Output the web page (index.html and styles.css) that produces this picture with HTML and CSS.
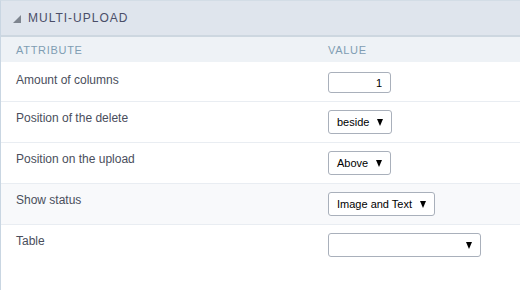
FILE: index.html
```html
<!DOCTYPE html>
<html lang="en">
<head>
    <meta charset="UTF-8">
    <title>Multi-Upload</title>
    <link rel="stylesheet" href="styles.css">
</head>
<body>

    <div class="panel">
        <div class="panel-head">
            <span class="caret"></span>
            <span class="title">MULTI-UPLOAD</span>
        </div>
        <div class="row col-head">
            <div class="label">ATTRIBUTE</div>
            <div class="value">VALUE</div>
        </div>
        <div class="row first">
            <div class="label">Amount of columns</div>
            <div class="value"><input class="num" type="text" value="1"></div>
        </div>
        <div class="row">
            <div class="label">Position of the delete</div>
            <div class="value"><div class="select w64"><span>beside</span><span class="arrow"></span></div></div>
        </div>
        <div class="row">
            <div class="label">Position on the upload</div>
            <div class="value"><div class="select w63"><span>Above</span><span class="arrow"></span></div></div>
        </div>
        <div class="row alt">
            <div class="label">Show status</div>
            <div class="value"><div class="select w107"><span>Image and Text</span><span class="arrow"></span></div></div>
        </div>
        <div class="row last">
            <div class="label">Table</div>
            <div class="value"><div class="select w153"><span></span><span class="arrow"></span></div></div>
        </div>
    </div>

</body>
</html>
```

FILE: styles.css
```css
body {
    margin: 0;
    font-family: "Liberation Sans", Arial, sans-serif;
    background: #ffffff;
}
.panel {
    height: 290px;
    border-top: 1px solid #d3dde6;
    border-left: 1px solid #c9d6e2;
    box-sizing: border-box;
}
.panel-head {
    height: 34px;
    background: #dfe5ed;
    border-bottom: 2px solid #cdd7e0;
    display: flex;
    align-items: center;
    padding-left: 12px;
}
.caret {
    width: 0;
    height: 0;
    border-left: 8px solid transparent;
    border-bottom: 8px solid #7e858f;
    margin-right: 7px;
    margin-top: 1px;
}
.title {
    font-size: 12px;
    letter-spacing: 1px;
    color: #4a4e68;
}
.row {
    display: grid;
    grid-template-columns: 327px 1fr;
    border-top: 1px solid #e9edf2;
    padding: 8px 0;
}
.label {
    padding-left: 15px;
    font-size: 12px;
    line-height: 16px;
    color: #4a4e5c;
}
.col-head {
    border-top: none;
    background: #eef2f6;
    height: 25px;
    padding: 0;
    align-items: center;
    box-sizing: border-box;
}
.col-head .label,
.col-head .value {
    font-size: 11px;
    letter-spacing: 0.7px;
    color: #7f9db3;
}
.row.first {
    border-top: none;
    padding-top: 10px;
}
.row.alt {
    background: #f8f9fb;
}
.num {
    width: 63px;
    height: 21px;
    box-sizing: border-box;
    border: 1px solid #a9b0bb;
    border-radius: 3px;
    text-align: right;
    padding: 0 8px;
    font-family: "Liberation Sans", Arial, sans-serif;
    font-size: 11px;
    color: #000;
    margin: 0;
    display: block;
}
.select {
    height: 24px;
    box-sizing: border-box;
    border: 1px solid #a9b0bb;
    border-radius: 3px;
    display: flex;
    align-items: center;
    justify-content: space-between;
    padding: 0 8px 0 8px;
    font-size: 11px;
    white-space: nowrap;
    color: #000;
    background: #fff;
}
.arrow {
    width: 0;
    height: 0;
    border-left: 3px solid transparent;
    border-right: 3px solid transparent;
    border-top: 7px solid #000;
}
.w63 { width: 63px; }
.w64 { width: 64px; }
.w107 { width: 107px; }
.w153 { width: 153px; }
```
